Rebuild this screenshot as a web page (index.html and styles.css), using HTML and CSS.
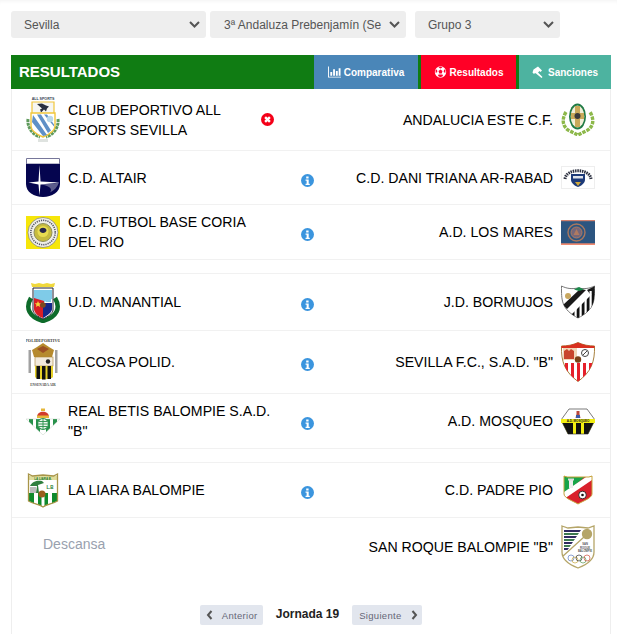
FILE: index.html
```html
<!DOCTYPE html>
<html lang="es">
<head>
<meta charset="utf-8">
<title>Resultados</title>
<link rel="stylesheet" href="styles.css">
</head>
<body>
<div class="filters">
  <div class="select s1"><span class="select-text">Sevilla</span><svg class="chev" viewBox="0 0 11 7"><path d="M1 1l4.500 4.500L10 1" fill="none" stroke="#555" stroke-width="2"/></svg></div>
  <div class="select s2"><span class="select-text">3ª Andaluza Prebenjamín (Se</span><svg class="chev" viewBox="0 0 11 7"><path d="M1 1l4.500 4.500L10 1" fill="none" stroke="#555" stroke-width="2"/></svg></div>
  <div class="select s3"><span class="select-text">Grupo 3</span><svg class="chev" viewBox="0 0 11 7"><path d="M1 1l4.500 4.500L10 1" fill="none" stroke="#555" stroke-width="2"/></svg></div>
</div>
<div class="panel">
  <header class="panel-head">
    <h1 class="panel-title">RESULTADOS</h1>
    <a class="tab tab-blue"><svg class="tab-ico" viewBox="0 0 14 12"><path d="M0 0h1v11h13v1H0zM2.500 6h2v4h-2zM5.500 3h2v7h-2zM8.500 5h2v5h-2zM11.500 2h2v8h-2z" fill="#fff"/></svg>Comparativa</a>
    <a class="tab tab-red"><svg class="tab-ico" viewBox="0 0 12 12"><circle cx="6" cy="6" r="5.700" fill="#fff"/><path d="M6 3.600l2 1.500-.8 2.400H4.800L4 5.100zM6 .5l2 1-2 1-2-1zM1 3.500l1.500.3L2.800 6 1.200 7zM11 3.500l-1.500.3L9.200 6l1.600 1zM3.500 10l.5-1.600h4l.5 1.600L6 11.300z" fill="#f03"/></svg>Resultados</a>
    <a class="tab tab-teal"><svg class="tab-ico" viewBox="0 0 12 12"><path d="M5.500 .5l4 4-1.500 1.500-1-1-1.500 1.500 4.500 4.500-1 1L3.500 7.500 2.500 7 1.500 8 0 6.500 1 3.500z" fill="#fff"/></svg>Sanciones</a>
  </header>

  <div class="match match-first">
    <div class="team">
      <svg class="logo" viewBox="0 0 34 47"><text x="17" y="4" font-size="3.600" text-anchor="middle" fill="#345" font-family="Liberation Sans" font-weight="700">ALL SPORTS</text><path d="M2 23c-1 9 5 16 12 18M32 23c1 9-5 16-12 18" fill="none" stroke="#5f9a5c" stroke-width="3" stroke-dasharray="3 .7"/><path d="M6 6h22v12H6z" fill="#f6f6f2" stroke="#f1c63b" stroke-width="1.200"/><path d="M11 8l5-.5 4 2 3 1-2 2-1 3-2-2-3 3-1-3 2-1z" fill="#2a3040"/><path d="M5 17h24v13c0 5-7 9-12 11-5-2-12-6-12-11z" fill="#fff" stroke="#f1c63b" stroke-width="1.400"/><path d="M7 19l14 20-4 1L6 26zM11 18.500h4l10 16-3 2.500zM18 18.500h3l7 10v2z" fill="#5f90c6"/><circle cx="24" cy="23" r="3.200" fill="#b9d8ea"/><rect x="12" y="43" width="10" height="3" fill="#dfe3e0"/></svg>
      <span class="name">CLUB DEPORTIVO ALL SPORTS SEVILLA</span>
    </div>
    <div class="status"><svg class="ico-x" viewBox="0 0 12 12"><circle cx="6" cy="6" r="6" fill="#f40018"/><path d="M3.800 3.800l4.400 4.400M8.200 3.800L3.800 8.200" stroke="#fff" stroke-width="2.200"/></svg></div>
    <div class="team team-right">
      <span class="name">ANDALUCIA ESTE C.F.</span>
      <svg class="logo" viewBox="0 0 34 33"><path d="M5 9c-5 8-3 16 4 19l8 4 8-4c7-3 9-11 4-19" fill="none" stroke="#8db84a" stroke-width="3.400" stroke-dasharray="3.500 1"/><ellipse cx="16.500" cy="13.500" rx="8.500" ry="13" fill="#1f7a44"/><ellipse cx="16.500" cy="13.500" rx="6.800" ry="11" fill="#f2eed8"/><path d="M14 3h5v7h4v6h-4v8h-5v-8h-4v-6h4z" fill="#c9a95a"/><circle cx="16.500" cy="13" r="3" fill="#3a3a3a"/></svg>
    </div>
  </div>

  <div class="match match-2">
    <div class="team">
      <svg class="logo" viewBox="0 0 34 39"><path d="M.5.500h33V6H.5z" fill="#fff" stroke="#77779a"/><path d="M0 6h34v20c0 8-8 13-17 13S0 34 0 26z" fill="#05054f"/><path d="M13.500 7l1 16.500 19 1-19 2-1 11-1-11-10-2 10-1z" fill="#fff"/><path d="M14 26c7 0 14-.5 19-1.500-2 5-5 8-9 10 2-3 2-6-10-8.500z" fill="#fff" opacity=".35"/></svg>
      <span class="name">C.D. ALTAIR</span>
    </div>
    <div class="status"><svg class="ico-i" viewBox="0 0 12 12"><use href="#info"/></svg></div>
    <div class="team team-right">
      <span class="name">C.D. DANI TRIANA AR-RABAD</span>
      <svg class="logo" viewBox="0 0 34 23"><rect x=".5" y=".5" width="33" height="22" fill="#fff" stroke="#eee"/><path d="M4 13C5 2 29 2 30 13" fill="none" stroke="#2c3040" stroke-width="3" stroke-dasharray="1.500 .8"/><path d="M10 8h14v6c0 3-4 6-7 7-3-1-7-4-7-7z" fill="#1d3a78"/><path d="M12 10h10v2.500H12z" fill="#dfe3ea"/><path d="M14 16h6l-3 4z" fill="#d0a93c"/></svg>
    </div>
  </div>

  <div class="match match-3">
    <div class="team">
      <svg class="logo" viewBox="0 0 34 33"><rect width="34" height="33" fill="#f6e60a"/><circle cx="17" cy="16.500" r="15" fill="#f0f0e8" stroke="#667" stroke-width=".6"/><circle cx="17" cy="16.500" r="12.200" fill="none" stroke="#556" stroke-width="1.600" stroke-dasharray="1.200 1"/><circle cx="17" cy="16.500" r="9" fill="#c6bb3e" stroke="#8f8f58"/><circle cx="17" cy="15.500" r="5.500" fill="#e8dc50"/><path d="M13.500 14c1-3 6-3 7 0 0 2-2 3-3.500 3s-3.500-1-3.500-3z" fill="#26264a"/></svg>
      <span class="name">C.D. FUTBOL BASE CORIA DEL RIO</span>
    </div>
    <div class="status"><svg class="ico-i" viewBox="0 0 12 12"><use href="#info"/></svg></div>
    <div class="team team-right">
      <span class="name">A.D. LOS MARES</span>
      <svg class="logo" viewBox="0 0 34 25"><rect width="34" height="25" fill="#2c5580"/><rect width="34" height="1.200" fill="#d0806e"/><rect y="23.300" width="34" height="1.700" fill="#f08a70"/><circle cx="15.500" cy="12.500" r="8.500" fill="none" stroke="#a9785f" stroke-width="1.400"/><circle cx="15.500" cy="12.500" r="5.500" fill="#75677a" stroke="#b07a60"/><path d="M15.500 9l3 6h-6z" fill="#b07a60"/></svg>
    </div>
  </div>
  <div class="spacer"></div>

  <div class="match match-4">
    <div class="team">
      <svg class="logo" viewBox="0 0 34 41"><path d="M5 16c-6 10-2 19 12 23 14-4 18-13 12-23" fill="none" stroke="#0d6b2a" stroke-width="4.500"/><path d="M6 5L5 1l4 1 4-1 4 1 4-1 4 1 4-1-1 4z" fill="#f0d83c"/><path d="M7 6h20v22c0 3-5 7-10 9-5-2-10-6-10-9z" fill="#fff" stroke="#223"/><path d="M8 8h18v9L8 24z" fill="#7fcbe8"/><path d="M8 16l10 3-1 17c-4-1-9-5-9-9z" fill="#d81f26"/><path d="M17 21h9v6c0 3-4 6-9 9z" fill="#14288a"/><path d="M20 15h5v5h-5z" fill="#7fcbe8"/><path d="M12 19l1 2.300 2.300 0-1.800 1.500.6 2.200-2.100-1.200-2.100 1.200.6-2.200L8.700 21.300 11 21.300z" fill="#f5d33a"/><circle cx="17" cy="23" r="2.800" fill="#7a4a20"/></svg>
      <span class="name">U.D. MANANTIAL</span>
    </div>
    <div class="status"><svg class="ico-i" viewBox="0 0 12 12"><use href="#info"/></svg></div>
    <div class="team team-right">
      <span class="name">J.D. BORMUJOS</span>
      <svg class="logo" viewBox="0 0 34 34"><defs><clipPath id="bor"><path d="M.5 1c6 3 11 3 16.500 2 5.500 1 10.500 1 16.500-2 0 14 1 23-16.500 32C0 24 .5 15 .5 1z"/></clipPath></defs><path d="M.5 1c6 3 11 3 16.500 2 5.500 1 10.500 1 16.500-2 0 14 1 23-16.500 32C0 24 .5 15 .5 1z" fill="#fff" stroke="#777"/><g clip-path="url(#bor)"><path d="M2 20L19 4l6 1L6 24z" fill="#1a1a1a"/><path d="M26 5l8-4v10l-5-2z" fill="#1a1a1a"/><path d="M10 30L33 7l2 27H10z" fill="#111"/><path d="M13.500 20h2.200v14h-2.200zM18.500 15h2.200v19h-2.200zM23.500 10h2.200v24h-2.200zM28.500 6h2.200v28h-2.200z" fill="#fff"/></g><circle cx="7" cy="11" r="3" fill="#c9a860"/><path d="M13 4.500l5-2.500 5 2.500-5 1.500z" fill="#1a8a4a"/></svg>
    </div>
  </div>

  <div class="match match-5">
    <div class="team">
      <svg class="logo" viewBox="0 0 34 50"><text x="17" y="5" font-size="4.200" text-anchor="middle" fill="#444" font-family="Liberation Serif" font-weight="700">POLIDEPORTIVO</text><path d="M8 20L6 13l5-3 6-4 6 4 5 3-2 7z" fill="#b68a2e"/><path d="M11 12l6-3 6 3-6 4z" fill="#8a2a1f" opacity=".6"/><rect x="9" y="20" width="18" height="9" fill="#f2eadc" stroke="#a88432" stroke-width=".6"/><circle cx="22" cy="24.500" r="2.200" fill="#222"/><path d="M9 29h18v11c-2 3-16 3-18 0z" fill="#e6d028"/><path d="M10.500 29h3.500v13h-3.500zM16 29h3.500v13.500H16zM21.500 29H25v13h-3.500z" fill="#111"/><path d="M2.500 13h2.500v23H2.500zM29 13h2.500v23H29z" fill="#8a8a8a" opacity=".8"/><text x="17" y="49" font-size="3.400" text-anchor="middle" fill="#444" font-family="Liberation Serif" font-weight="700">ENSENADA AIR</text></svg>
      <span class="name">ALCOSA POLID.</span>
    </div>
    <div class="status"><svg class="ico-i" viewBox="0 0 12 12"><use href="#info"/></svg></div>
    <div class="team team-right">
      <span class="name">SEVILLA F.C., S.A.D. "B"</span>
      <svg class="logo" viewBox="0 0 34 40"><defs><clipPath id="sev"><path d="M.5 4C6 4 12 3 17 .5 22 3 28 4 33.500 4 34 20 30 30 17 39.500 4 30 0 20 .5 4z"/></clipPath></defs><path d="M.5 4C6 4 12 3 17 .5 22 3 28 4 33.500 4 34 20 30 30 17 39.500 4 30 0 20 .5 4z" fill="#fff" stroke="#a8803e"/><g clip-path="url(#sev)"><path d="M0 0h34v6H0z" fill="#d8301f"/><path d="M2 6h14v12H2z" fill="#f0d8b8"/><path d="M3 9l3-2 2 2 2-2 3 2v8H3z" fill="#c8462c"/><path d="M4 21h3v19H4zM10 21h3v19h-3zM16 21h3v19h-3zM22 21h3v19h-3zM28 21h3v19h-3z" fill="#e5202a"/></g><circle cx="17" cy="17.500" r="3.200" fill="#7a4318"/><circle cx="24" cy="11" r="3.500" fill="none" stroke="#444"/><path d="M22 13l4-4" stroke="#444"/></svg>
    </div>
  </div>

  <div class="match match-6">
    <div class="team">
      <svg class="logo" viewBox="0 0 34 27"><defs><clipPath id="bet"><path d="M0 11h34L17 27z"/></clipPath></defs><path d="M0 11h34L17 27z" fill="#fff"/><g clip-path="url(#bet)"><path d="M3 11h4v16H3zM10 11h4v16h-4zM20 11h4v16h-4zM27 11h4v16h-4z" fill="#27914a"/></g><path d="M0 11h34L17 27z" fill="none" stroke="#b8c8b8" stroke-width=".4"/><circle cx="17" cy="16" r="5.500" fill="#eef5ee" stroke="#27914a" stroke-width="1.200"/><path d="M12 16h10M17 11v10M13 13.500h8M13 18.500h8" stroke="#27914a" stroke-width=".9"/><path d="M11 9C11 2 23 2 23 9z" fill="#d13b2c"/><path d="M11 7.500h12V10H11z" fill="#e5b73b"/><path d="M15 .5h4V3h-4z" fill="#e5b73b"/></svg>
      <span class="name">REAL BETIS BALOMPIE S.A.D. "B"</span>
    </div>
    <div class="status"><svg class="ico-i" viewBox="0 0 12 12"><use href="#info"/></svg></div>
    <div class="team team-right">
      <span class="name">A.D. MOSQUEO</span>
      <svg class="logo" viewBox="0 0 34 27"><defs><clipPath id="mos"><path d="M8 1h18l8 11-7 14H7L0 12z"/></clipPath></defs><path d="M8 1h18l8 11-7 14H7L0 12z" fill="#fff"/><g clip-path="url(#mos)"><path d="M0 11h34v16H0z" fill="#f2ee12"/><path d="M0 15h12v12H0zM15 15h5v12h-5zM23 15h11v12H23z" fill="#111"/></g><path d="M8 1h18l8 11-7 14H7L0 12z" fill="none" stroke="#222" stroke-width=".6"/><path d="M0 11h34v4H0z" fill="#f2ee12"/><text x="17" y="14.300" font-size="3" text-anchor="middle" fill="#222" font-family="Liberation Sans" font-weight="700">A.D. MOSQUEO</text><path d="M15.500 3h3v3l1 4h-5l1-4z" fill="#b9473a"/><path d="M15 7h4v3h-4z" fill="#3d5aa8"/></svg>
    </div>
  </div>
  <div class="spacer"></div>

  <div class="match match-7">
    <div class="team">
      <svg class="logo" viewBox="0 0 34 35"><defs><clipPath id="lia"><path d="M2.500 1l4 2 10.500-1 10.500 1 4-2v27c-5 3-10 3-14.500 6-4.500-3-9.500-3-14.500-6z"/></clipPath></defs><path d="M2.500 1l4 2 10.500-1 10.500 1 4-2v27c-5 3-10 3-14.500 6-4.500-3-9.500-3-14.500-6z" fill="#fff"/><g clip-path="url(#lia)"><path d="M0 3h34v4H0z" fill="#e0dd9c"/><path d="M3 20h28v15H3z" fill="#0f8a2c"/><path d="M8 20h4v15H8zM15.500 20h3v15h-3zM22 20h4v15h-4z" fill="#fff"/></g><path d="M2.500 1l4 2 10.500-1 10.500 1 4-2v27c-5 3-10 3-14.500 6-4.500-3-9.500-3-14.500-6z" fill="none" stroke="#a89548" stroke-width="1.300"/><path d="M4 13c2-5 8-6 12-5l2 2-6 2 1 8h-3l1-7z" fill="#2f7f3f"/><path d="M4 14h6v6H4z" fill="#bbb"/><text x="24" y="16" font-size="4.500" text-anchor="middle" fill="#1a7a30" font-family="Liberation Sans" font-weight="700">L.B</text><text x="17" y="6.500" font-size="3" text-anchor="middle" fill="#1a7a30" font-family="Liberation Sans" font-weight="700">LA LIARA B.</text><circle cx="16" cy="21" r="3.500" fill="#9a5f20"/></svg>
      <span class="name">LA LIARA BALOMPIE</span>
    </div>
    <div class="status"><svg class="ico-i" viewBox="0 0 12 12"><use href="#info"/></svg></div>
    <div class="team team-right">
      <span class="name">C.D. PADRE PIO</span>
      <svg class="logo" viewBox="0 0 34 30"><defs><clipPath id="pio"><path d="M3 1l3 1 11 0 11 0 3-1v18c0 4-9 7-14 10C12 26 3 23 3 19z"/></clipPath></defs><g clip-path="url(#pio)"><path d="M0 0h34v30H0z" fill="#d9202c"/><path d="M0 0h26L0 22z" fill="#18a449"/><path d="M0 19L28 0l6 3L0 26z" fill="#fff"/></g><path d="M3 1l3 1 11 0 11 0 3-1v18c0 4-9 7-14 10C12 26 3 23 3 19z" fill="none" stroke="#c6a53c"/><path d="M8 4h4v9H8z" fill="#eee"/><path d="M7 3.500h6v2H7z" fill="#ddd"/><circle cx="21.500" cy="20" r="3.800" fill="#fff" stroke="#111" stroke-width=".8"/><circle cx="21.500" cy="20" r="1.300" fill="#111"/></svg>
    </div>
  </div>

  <div class="match match-rest">
    <div class="rest">Descansa</div>
    <div class="team team-right">
      <span class="name">SAN ROQUE BALOMPIE "B"</span>
      <svg class="logo" viewBox="0 0 34 44"><path d="M1 1l6 2 10-1 10 1 6-2v26c0 8-8 13-16 16C9 40 1 35 1 27z" fill="#fff" stroke="#b5a568" stroke-width="1.300"/><path d="M3 5h17l-1.500 2H3zM3 11h13l-1.500 2H3zM3 17h9l-1.500 2H3zM3 23h5l-1.500 2H3z" fill="#2f2a60"/><path d="M3 8h15l-1.500 2H3zM3 14h11l-1.500 2H3zM3 20h7l-1.500 2H3z" fill="#3d7a50"/><circle cx="26" cy="9" r="5.200" fill="#b5a568"/><path d="M2 31L23 12" stroke="#b5a568" stroke-width="1.300"/><text x="24" y="20" font-size="2.700" text-anchor="middle" fill="#555" font-family="Liberation Sans" font-weight="700">SAN</text><text x="24" y="23.500" font-size="2.700" text-anchor="middle" fill="#555" font-family="Liberation Sans" font-weight="700">ROQUE</text><text x="24" y="27" font-size="2.700" text-anchor="middle" fill="#555" font-family="Liberation Sans" font-weight="700">BALOMPIE</text><g fill="none" stroke-width=".7"><circle cx="10" cy="33" r="3" stroke="#5b7bc0"/><circle cx="14" cy="35" r="3" stroke="#c9a83c"/><circle cx="18" cy="33" r="3" stroke="#333"/><circle cx="22" cy="35" r="3" stroke="#5a9a58"/><circle cx="26" cy="33" r="3" stroke="#d0503c"/></g></svg>
    </div>
  </div>

  <nav class="pager">
    <a class="page-btn page-prev"><svg class="page-chev" viewBox="0 0 7 10"><path d="M5.500 1L2 5l3.500 4" fill="none" stroke="#555" stroke-width="2"/></svg>Anterior</a>
    <strong class="round">Jornada 19</strong>
    <a class="page-btn page-next">Siguiente<svg class="page-chev" viewBox="0 0 7 10"><path d="M1.500 1L5 5 1.500 9" fill="none" stroke="#555" stroke-width="2"/></svg></a>
  </nav>
</div>
<svg class="defs" width="0" height="0"><symbol id="info" viewBox="0 0 12 12"><circle cx="6" cy="6" r="6" fill="#3b95de"/><path d="M4.800 2.300h2.200v1.800H4.800zM4.200 5h2.900v3.900h1v1.200H4.200V8.900h1V6.200h-1z" fill="#fff"/></symbol></svg>
</body>
</html>
```
FILE: styles.css
```css
* { box-sizing: border-box; }
html, body { margin: 0; padding: 0; }
body {
  width: 617px;
  height: 634px;
  overflow: hidden;
  background: #fff;
  font-family: "Liberation Sans", Arial, sans-serif;
  color: #000;
}
.filters {
  display: flex;
  padding: 11px 0 0 11px;
  height: 55px;
  box-shadow: inset 0 4px 4px -3px #f2f2f2;
}
.select {
  height: 27px;
  display: flex;
  align-items: center;
  justify-content: space-between;
  background: #eee;
  border-radius: 3px;
  font-size: 12px;
  color: #555;
  padding: 0 6px 0 13px;
}
.s1 { width: 195px; margin-right: 4px; }
.s2 { width: 196px; margin-right: 9px; padding-left: 14px; }
.s3 { width: 145px; }
.chev { width: 11px; height: 7px; }
.panel {
  margin: 0 6px 0 11px;
  border-left: 1px solid #eee;
  border-right: 1px solid #eee;
  height: 579px;
}
.panel-head {
  display: flex;
  height: 34px;
  margin: 0 -1px;
  background: #107c13;
  color: #fff;
}
.panel-title {
  flex: 1;
  margin: 0;
  padding-left: 8px;
  font-size: 15px;
  line-height: 34px;
  font-weight: 700;
}
.tab {
  display: flex;
  align-items: center;
  justify-content: center;
  font-size: 10px;
  font-weight: 700;
  color: #fff;
}
.tab-blue { width: 104px; background: #4a86b8; }
.tab-red { width: 95px; margin-left: 3px; background: #ff0026; }
.tab-teal { width: 92px; margin-left: 3px; background: #4db3a0; }
.tab-ico { width: 13px; height: 12px; margin-right: 3px; }
.match {
  display: grid;
  grid-template-columns: 247px 69px 1fr;
  align-items: center;
  padding: 0 15px 0 14px;
  border-bottom: 1px solid #f1f1f1;
}
.match-first { grid-template-columns: 220px 43px 1fr; height: 62px; }
.match-2 { height: 54px; }
.match-3 { height: 55px; }
.match-4 { height: 57px; }
.match-5 { height: 63px; }
.match-6 { height: 55px; }
.match-7 { height: 55px; }
.match-rest {
  grid-template-columns: 1fr auto;
  align-items: start;
  height: 73px;
  border-bottom: 0;
  padding-top: 7px;
}
.spacer { height: 14px; border-bottom: 1px solid #f1f1f1; }
.team { display: flex; align-items: center; min-width: 0; }
.team-right { justify-content: flex-end; }
.name { font-size: 14.150px; line-height: 20px; margin-left: 8px; }
.team-right .name { margin: 0 8px 0 0; text-align: right; }
.logo { width: 34px; flex: none; }
.status { display: flex; justify-content: center; padding-top: 5px; }
.match-first .status { padding-top: 0; }
.ico-x, .ico-i { width: 13px; height: 13px; }
.rest { font-size: 14px; color: #99a1ae; padding: 11px 0 0 17px; }
.pager {
  display: flex;
  justify-content: center;
  align-items: flex-start;
  gap: 13px;
  padding-top: 14px;
}
.page-btn {
  display: flex;
  align-items: center;
  height: 20px;
  background: #e2e6ee;
  border-radius: 2px;
  font-size: 9.500px;
  letter-spacing: .3px;
  color: #667;
}
.page-prev { width: 63px; padding-left: 6px; }
.page-prev .page-chev { margin-right: 9px; }
.page-next { width: 70px; padding-left: 7px; }
.page-next .page-chev { margin-left: 9px; }
.page-chev { width: 7px; height: 10px; flex: none; }
.round { font-size: 12px; color: #222; line-height: 18px; }
.defs { position: absolute; }
```
